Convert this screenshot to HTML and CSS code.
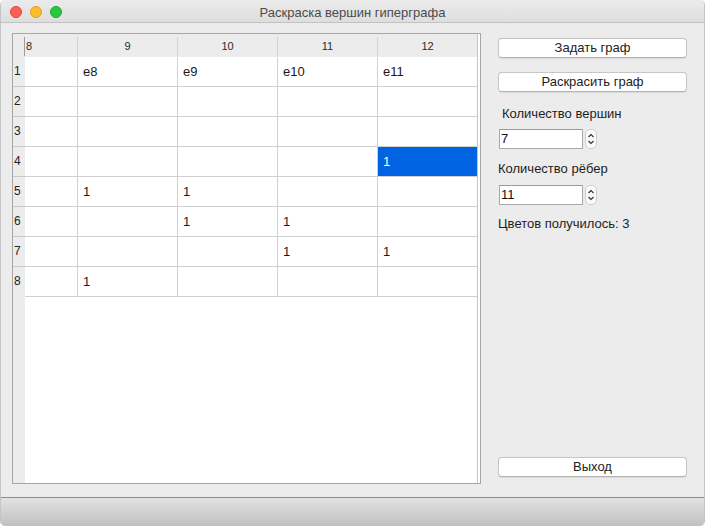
FILE: index.html
```html
<!DOCTYPE html>
<html lang="ru">
<head>
<meta charset="utf-8">
<title>Раскраска вершин гиперграфа</title>
<link rel="stylesheet" href="styles.css">
</head>
<body>
<div class="window">
  <div class="titlebar">
    <div class="lights">
      <span class="light red"></span>
      <span class="light yellow"></span>
      <span class="light green"></span>
    </div>
    <div class="title">Раскраска вершин гиперграфа</div>
  </div>
  <div class="content">
    <div class="frame">
      <div class="viewport">
        <div class="hrow">
          <div class="corner"></div>
          <div class="hcell c8">8</div>
          <div class="hcell">9</div>
          <div class="hcell">10</div>
          <div class="hcell">11</div>
          <div class="hcell last">12</div>
        </div>
        <div class="row">
          <div class="vh">1</div><div class="cell c8"></div><div class="cell">e8</div><div class="cell">e9</div><div class="cell">e10</div><div class="cell last">e11</div>
        </div>
        <div class="row">
          <div class="vh">2</div><div class="cell c8"></div><div class="cell"></div><div class="cell"></div><div class="cell"></div><div class="cell last"></div>
        </div>
        <div class="row">
          <div class="vh">3</div><div class="cell c8"></div><div class="cell"></div><div class="cell"></div><div class="cell"></div><div class="cell last"></div>
        </div>
        <div class="row">
          <div class="vh">4</div><div class="cell c8"></div><div class="cell"></div><div class="cell"></div><div class="cell"></div><div class="cell last selected">1</div>
        </div>
        <div class="row">
          <div class="vh">5</div><div class="cell c8"></div><div class="cell">1</div><div class="cell">1</div><div class="cell"></div><div class="cell last"></div>
        </div>
        <div class="row">
          <div class="vh">6</div><div class="cell c8"></div><div class="cell"></div><div class="cell">1</div><div class="cell">1</div><div class="cell last"></div>
        </div>
        <div class="row">
          <div class="vh">7</div><div class="cell c8"></div><div class="cell"></div><div class="cell"></div><div class="cell">1</div><div class="cell last">1</div>
        </div>
        <div class="row">
          <div class="vh lastvh">8</div><div class="cell c8"></div><div class="cell">1</div><div class="cell"></div><div class="cell"></div><div class="cell last"></div>
        </div>
      </div>
    </div>
    <div class="side">
      <button class="btn first">Задать граф</button>
      <button class="btn second">Раскрасить граф</button>
      <div class="label l1">Количество вершин</div>
      <div class="spin s1">
        <div class="spin-input">7</div>
        <div class="spin-arrows">
          <svg width="10" height="18" viewBox="0 0 10 18"><path d="M2.5 7 L5 4.5 L7.5 7" fill="none" stroke="#333" stroke-width="1.2"/><path d="M2.5 11 L5 13.5 L7.5 11" fill="none" stroke="#333" stroke-width="1.2"/></svg>
        </div>
      </div>
      <div class="label l2">Количество рёбер</div>
      <div class="spin s2">
        <div class="spin-input">11</div>
        <div class="spin-arrows">
          <svg width="10" height="18" viewBox="0 0 10 18"><path d="M2.5 7 L5 4.5 L7.5 7" fill="none" stroke="#333" stroke-width="1.2"/><path d="M2.5 11 L5 13.5 L7.5 11" fill="none" stroke="#333" stroke-width="1.2"/></svg>
        </div>
      </div>
      <div class="label l3">Цветов получилось: 3</div>
      <button class="btn exit">Выход</button>
    </div>
  </div>
  <div class="statusbar"></div>
</div>
</body>
</html>
```

FILE: styles.css
```css
html, body {
  margin: 0;
  padding: 0;
  background: #ffffff;
}

body {
  font-family: "Liberation Sans", Arial, sans-serif;
  font-size: 13px;
  color: #1e1e1e;
}

.window {
  width: 705px;
  height: 526px;
  box-sizing: border-box;
  display: flex;
  flex-direction: column;
  background: #ececec;
  border-left: 1px solid #c4c4c4;
  border-right: 1px solid #c4c4c4;
  border-radius: 5px;
  overflow: hidden;
}

.titlebar {
  height: 23px;
  box-sizing: border-box;
  border-bottom: 1px solid #c2c2c2;
  background: linear-gradient(#ebebeb, #dedede);
  position: relative;
  display: flex;
  align-items: center;
  justify-content: center;
}

.lights {
  position: absolute;
  left: 9px;
  top: 6px;
  display: flex;
  gap: 8px;
}

.light {
  width: 12px;
  height: 12px;
  border-radius: 50%;
  box-sizing: border-box;
}

.red { background: #fe5f57; border: 1px solid #e1443e; }
.yellow { background: #febc2e; border: 1px solid #dfa023; }
.green { background: #28c840; border: 1px solid #1aab29; }

.title {
  font-size: 13px;
  color: #4b4b4b;
  line-height: 22px;
  padding-top: 3px;
}

.content {
  flex: 1;
  display: flex;
  padding: 10px 0 13px 11px;
  min-height: 0;
}

.frame {
  width: 469px;
  box-sizing: border-box;
  border: 1px solid #a6a6a6;
  background: #ffffff;
}

.viewport {
  width: 465px;
  height: 100%;
  box-sizing: border-box;
  border-right: 1px solid #c6c6c6;
  background: linear-gradient(to right, #ececec 0, #ececec 12px, #ffffff 12px);
}

.hrow {
  display: flex;
  height: 23px;
  background: #ececec;
}

.corner {
  width: 12px;
  box-sizing: border-box;
  border-right: 1px solid #9c9c9c;
  margin: 3px 0 1px;
}

.hcell {
  width: 100px;
  box-sizing: border-box;
  border-right: 1px solid #d2d2d2;
  margin: 3px 0 1px;
  font-size: 11px;
  color: #2a2a2a;
  text-align: center;
  line-height: 19px;
}

.hcell.c8 {
  width: 53px;
  text-align: left;
  padding-left: 1px;
}

.hcell.last {
  width: 99px;
  border-right: none;
}

.row {
  display: flex;
  height: 30px;
}

.vh {
  width: 12px;
  box-sizing: border-box;
  border-bottom: 1px solid #c9c9c9;
  font-size: 12px;
  color: #222;
  padding-left: 1px;
  line-height: 29px;
}

.vh.lastvh {
  border-bottom: none;
}

.cell {
  width: 100px;
  box-sizing: border-box;
  border-right: 1px solid #d0d0d0;
  border-bottom: 1px solid #d0d0d0;
  padding-left: 5px;
  line-height: 29px;
  font-size: 13px;
  color: #1a1a1a;
}

.cell.c8 {
  width: 53px;
}

.cell.last {
  width: 99px;
  border-right: none;
}

.cell.selected {
  background: #0063e1;
  color: #ffffff;
}

.side {
  width: 189px;
  margin-left: 17px;
  padding-top: 5px;
  display: flex;
  flex-direction: column;
  align-items: flex-start;
}

.btn {
  width: 189px;
  height: 20px;
  box-sizing: border-box;
  border: 1px solid #c6c6c6;
  border-bottom-color: #b4b4b4;
  border-radius: 4px;
  background: #ffffff;
  font-family: "Liberation Sans", Arial, sans-serif;
  font-size: 13px;
  color: #222;
  padding: 0;
  line-height: 18px;
  text-align: center;
  box-shadow: 0 0.5px 1px rgba(0, 0, 0, 0.08);
}

.btn.second {
  margin-top: 14px;
}

.btn.exit {
  margin-top: auto;
  margin-bottom: 7px;
}

.label {
  line-height: 16px;
  font-size: 13px;
  color: #1e1e1e;
}

.l1 {
  margin-top: 14px;
  padding-left: 4px;
}

.l2 {
  margin-top: 12px;
}

.l3 {
  margin-top: 11px;
}

.spin {
  display: flex;
  align-items: center;
  margin-left: 1px;
  margin-top: 7px;
}

.s2 {
  margin-top: 8px;
}

.spin-input {
  width: 84px;
  height: 20px;
  box-sizing: border-box;
  border: 1px solid #a9a9a9;
  border-top-color: #9a9a9a;
  background: #ffffff;
  padding-left: 1px;
  line-height: 18px;
  font-size: 13px;
  color: #111;
}

.spin-arrows {
  width: 12px;
  height: 20px;
  box-sizing: border-box;
  margin-left: 2px;
  border: 1px solid #cfcfcf;
  border-radius: 5px;
  background: #fafafa;
  display: flex;
  align-items: center;
  justify-content: center;
}

.statusbar {
  height: 29px;
  box-sizing: border-box;
  border-top: 1px solid #8a8a8a;
  background: linear-gradient(#e2e2e2, #c0c0c0);
}
```
